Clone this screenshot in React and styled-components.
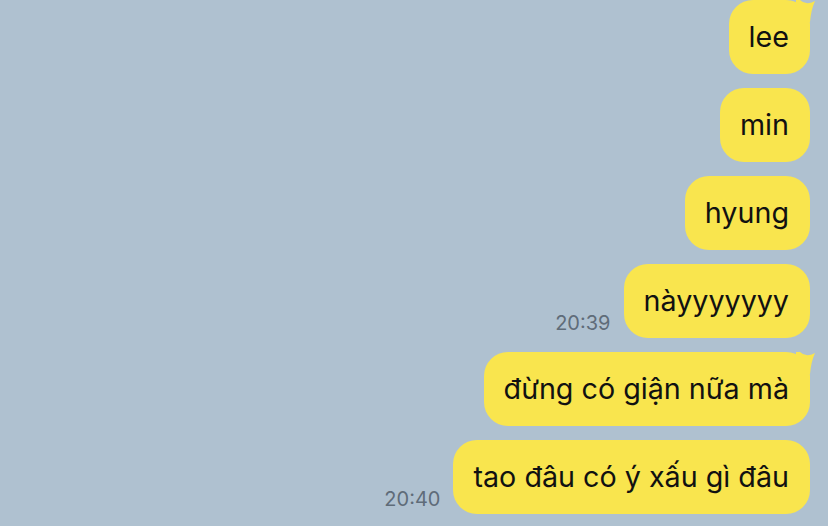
import React from 'react';
import styled, { createGlobalStyle } from 'styled-components';

const GlobalStyle = createGlobalStyle`
  html, body {
    margin: 0;
    padding: 0;
    background: #afc1d0;
  }
  body {
    font-family: 'Inter', 'Liberation Sans', sans-serif;
  }
`;

const messages = [
  { text: 'lee', first: true },
  { text: 'min' },
  { text: 'hyung' },
  { text: 'nàyyyyyyy', time: '20:39' },
  { text: 'đừng có giận nữa mà', first: true },
  { text: 'tao đâu có ý xấu gì đâu', time: '20:40' },
];

export default function App() {
  return (
    <>
      <GlobalStyle />
      <Chat>
        {messages.map((m, i) => (
          <Row key={i}>
            {m.time && <Time>{m.time}</Time>}
            <Bubble>
              {m.first && (
                <Tail viewBox="0 0 20 22" width="20" height="22">
                  <path d="M0 0 L4 0 Q 10 6 19 1 Q 15 10 14 22 L 0 22 Z" fill="#f9e54e" />
                </Tail>
              )}
              {m.text}
            </Bubble>
          </Row>
        ))}
      </Chat>
    </>
  );
}

const Chat = styled.div`
  width: 828px;
  height: 526px;
  box-sizing: border-box;
  padding: 0 18px 0 0;
  display: flex;
  flex-direction: column;
  align-items: flex-end;
  gap: 14px;
  overflow: hidden;
`;

const Row = styled.div`
  display: flex;
  align-items: flex-end;
  gap: 13px;
`;

const Time = styled.span`
  font-size: 20px;
  line-height: 22px;
  color: #5f6c79;
  margin-bottom: 4px;
`;

const Bubble = styled.div`
  position: relative;
  background: #f9e54e;
  color: #111;
  font-size: 28.7px;
  line-height: 34px;
  padding: 20px 21px 20px 20px;
  border-radius: 24px;
  white-space: nowrap;
`;

const Tail = styled.svg`
  position: absolute;
  top: 0;
  right: -6px;
  display: block;
`;
